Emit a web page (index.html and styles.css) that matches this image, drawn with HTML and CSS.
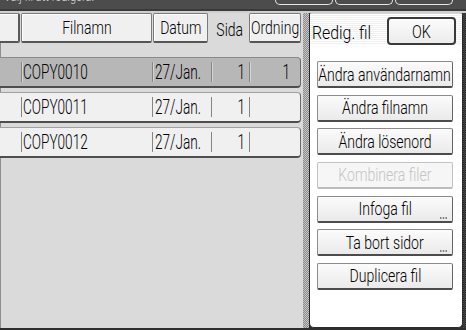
FILE: index.html
```html
<!DOCTYPE html>
<html lang="sv">
<head>
<meta charset="utf-8">
<title>Redig. fil</title>
<link rel="stylesheet" href="styles.css">
</head>
<body>
<div class="screen">
  <div class="topbar">
    <div class="topmsg"><span class="t tl">Välj fil att redigera.</span></div>
    <div class="tabs"><span class="tab"></span><span class="tab"></span><span class="tab"></span></div>
  </div>
  <div class="main">
    <div class="list">
      <div class="head">
        <div class="hcell h0"></div>
        <div class="hcell h-name"><span class="t">Filnamn</span></div>
        <div class="hcell h-date"><span class="t">Datum</span></div>
        <div class="hplain h-page"><span class="t">Sida</span></div>
        <div class="hcell h-order"><span class="t">Ordning</span></div>
      </div>
      <div class="row sel">
        <div class="c c0"></div>
        <div class="c c1"><span class="t tl">COPY0010</span></div>
        <div class="c c2"><span class="t tl">27/Jan.</span></div>
        <div class="c c3"><span class="t tr">1</span></div>
        <div class="c c4"><span class="t tr">1</span></div>
      </div>
      <div class="row">
        <div class="c c0"></div>
        <div class="c c1"><span class="t tl">COPY0011</span></div>
        <div class="c c2"><span class="t tl">27/Jan.</span></div>
        <div class="c c3"><span class="t tr">1</span></div>
        <div class="c c4"></div>
      </div>
      <div class="row">
        <div class="c c0"></div>
        <div class="c c1"><span class="t tl">COPY0012</span></div>
        <div class="c c2"><span class="t tl">27/Jan.</span></div>
        <div class="c c3"><span class="t tr">1</span></div>
        <div class="c c4"></div>
      </div>
    </div>
    <div class="sep"></div>
    <div class="panel">
      <div class="phead">
        <span class="ptitle"><span class="t tl">Redig. fil</span></span>
        <button class="ok"><span class="t">OK</span></button>
      </div>
      <div class="btns">
        <button class="btn"><span class="t">Ändra användarnamn</span></button>
        <button class="btn"><span class="t">Ändra filnamn</span></button>
        <button class="btn"><span class="t">Ändra lösenord</span></button>
        <button class="btn dis"><span class="t">Kombinera filer</span></button>
        <button class="btn"><span class="t">Infoga fil</span><svg class="more" width="7" height="2" viewBox="0 0 7 2"><rect x="0" y="0" width="1.5" height="2" fill="#808080"/><rect x="2.75" y="0" width="1.5" height="2" fill="#808080"/><rect x="5.5" y="0" width="1.5" height="2" fill="#808080"/></svg></button>
        <button class="btn"><span class="t">Ta bort sidor</span><svg class="more" width="7" height="2" viewBox="0 0 7 2"><rect x="0" y="0" width="1.5" height="2" fill="#808080"/><rect x="2.75" y="0" width="1.5" height="2" fill="#808080"/><rect x="5.5" y="0" width="1.5" height="2" fill="#808080"/></svg></button>
        <button class="btn"><span class="t">Duplicera fil</span></button>
      </div>
    </div>
    <div class="edge"></div>
  </div>
</div>
</body>
</html>
```
FILE: styles.css
```css
body {
  margin: 0;
  background: #353535;
  font-family: Roboto, "Liberation Sans", Arial, sans-serif;
  font-weight: 300;
  color: #000;
}

.screen {
  width: 466px;
  height: 330px;
  display: flex;
  flex-direction: column;
  background: #2e2e2e;
  overflow: hidden;
}

.t {
  display: inline-block;
  white-space: nowrap;
  transform: scaleX(var(--sx, 0.76));
  transform-origin: center;
}
.t.tl { transform-origin: left center; }
.t.tr { transform-origin: right center; }

/* top strip */
.topbar {
  height: 13px;
  flex: none;
  display: flex;
  align-items: flex-end;
  overflow: hidden;
  background: linear-gradient(#4c4c4c 0 9px, #3a3a3a 9px 11px, #cfcfcf 11px);
}
.topmsg {
  font-size: 14px;
  line-height: 17px;
  height: 17px;
  margin: 0 0 8px 4px;
  color: #d8d8d8;
  --sx: 0.8;
}
.tabs {
  margin-left: auto;
  margin-right: 13px;
  display: flex;
  gap: 2px;
  align-self: flex-start;
}
.tab {
  width: 58px;
  height: 5px;
  box-sizing: border-box;
  border: 1px solid #e6e6e6;
  border-top: 0;
  border-radius: 0 0 5px 5px;
}

/* main */
.main {
  height: 315px;
  flex: none;
  display: flex;
}

.list {
  width: 303px;
  flex: none;
  background: #dadada;
  box-shadow: inset 1px 0 0 #8e8e8e;
}

.head {
  display: flex;
  height: 30px;
  margin-bottom: 14px;
  font-size: 17.5px;
  --sx: 0.8;
}
.hcell {
  box-sizing: border-box;
  height: 30px;
  background: #f0f0f0;
  border: 1px solid #7a7a7a;
  border-bottom: 2px solid #555;
  box-shadow: inset 1px 1px 0 #fff;
  border-radius: 2px;
  display: flex;
  align-items: center;
  justify-content: center;
}
.h0 { width: 23px; margin-left: -3px; border-right: 2px solid #5a5a5a; }
.h-name { width: 131px; margin-left: 1px; }
.h-date { width: 55px; margin-left: 1px; }
.hplain {
  display: flex;
  align-items: center;
  justify-content: center;
  box-sizing: border-box;
  padding: 4px 0 0 2px;
}
.h-page { width: 41px; }
.h-order { width: 52px; }

.row {
  display: flex;
  align-items: center;
  box-sizing: border-box;
  width: 301px;
  height: 31px;
  margin-bottom: 4px;
  background: #f0f0f0;
  border-top: 1px solid #a0a0a0;
  border-right: 1px solid #6a6a6a;
  border-bottom: 2px solid #4e4e4e;
  border-radius: 0 4px 4px 0;
  font-size: 20px;
  --sx: 0.68;
}
.row.sel { background: #b7b7b7; border-top-color: #8a8a8a; }
.c {
  height: 20px;
  display: flex;
  align-items: center;
  box-sizing: border-box;
  border-left: 1px solid #858585;
}
.row.sel .c { box-shadow: inset 1px 0 0 #d4d4d4; }
.row.sel .c0 { box-shadow: none; }
.c0 { width: 21px; border-left: 0; }
.c1 { width: 131px; padding-left: 1px; }
.c2 { width: 59px; padding-left: 2px; }
.c3 { width: 38px; justify-content: flex-end; padding-right: 4px; }
.c4 { width: 51px; justify-content: flex-end; padding-right: 10px; }

.sep {
  width: 6px;
  flex: none;
  background: repeating-conic-gradient(#8a8a8a 0 25%, #c6c6c6 0 50%) 0 0 / 2px 2px;
}

.panel {
  width: 154px;
  flex: none;
  box-sizing: border-box;
  background: #fff;
  border: 1px solid #2a2a2a;
  border-top-color: #d4d4d4;
  border-radius: 3px 3px 5px 5px;
  display: flex;
  flex-direction: column;
}
.phead {
  box-sizing: border-box;
  height: 31px;
  padding: 3px 6px 0 2px;
  display: flex;
  align-items: center;
  justify-content: space-between;
  background: repeating-linear-gradient(#fff 0 1px, #f0f0f0 1px 2px);
}
.ptitle {
  font-size: 18px;
  --sx: 0.88;
  padding-top: 2px;
}
.ok {
  width: 69px;
  height: 28px;
  box-sizing: border-box;
  padding: 0;
  border: 2px solid #3a3a3a;
  border-radius: 4px;
  background: linear-gradient(#fbfbfb, #ececec);
  font-family: inherit;
  font-weight: inherit;
  font-size: 19px;
  color: #000;
  --sx: 0.76;
  display: flex;
  align-items: center;
  justify-content: center;
}

.btns {
  display: flex;
  flex-direction: column;
  gap: 6.67px;
  padding: 16px 0 0 7px;
}
.btn {
  position: relative;
  width: 136px;
  height: 27px;
  box-sizing: border-box;
  padding: 0;
  border: 1px solid #8c8c8c;
  border-right-color: #666;
  border-bottom: 2px solid #4c4c4c;
  border-radius: 2px;
  background: linear-gradient(#fbfbfb, #eaeaea);
  font-family: inherit;
  font-weight: inherit;
  font-size: 19px;
  color: #000;
  --sx: 0.74;
  display: flex;
  align-items: center;
  justify-content: center;
}
.btn.dis {
  color: #c4c4c4;
  border-color: #c2c2c2;
  border-bottom-color: #bcbcbc;
  background: #f6f6f6;
}
.more {
  position: absolute;
  right: 5px;
  bottom: 2px;
}

.edge {
  flex: 1;
  background: repeating-conic-gradient(#2a2a2a 0 25%, #4a4a4a 0 50%) 0 0 / 2px 2px;
}
```
